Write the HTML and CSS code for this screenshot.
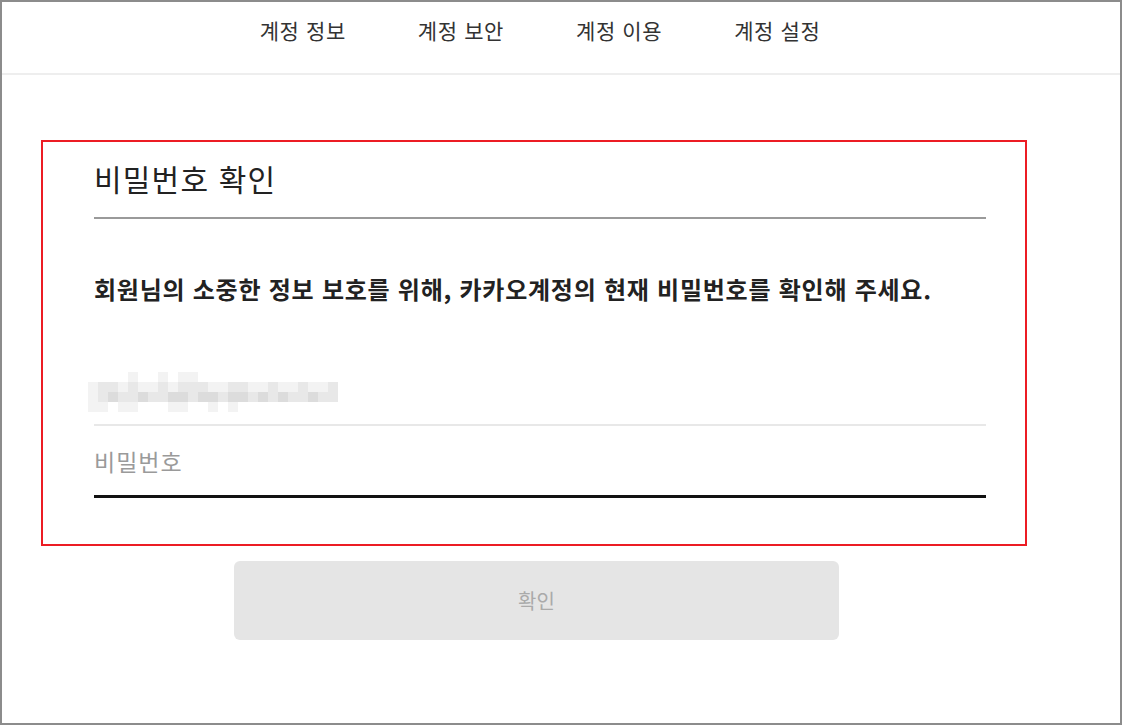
FILE: index.html
```html
<!DOCTYPE html>
<html lang="ko">
<head>
<meta charset="utf-8">
<title>비밀번호 확인</title>
<link rel="stylesheet" href="styles.css">
</head>
<body>
<div class="frame">
  <header class="topbar">
    <nav class="tabs">
      <a class="tab">계정 정보</a>
      <a class="tab">계정 보안</a>
      <a class="tab">계정 이용</a>
      <a class="tab">계정 설정</a>
    </nav>
  </header>
  <main class="content">
    <section class="panel">
      <h1 class="title">비밀번호 확인</h1>
      <p class="desc">회원님의 소중한 정보 보호를 위해, 카카오계정의 현재 비밀번호를 확인해 주세요.</p>
      <div class="id-field">
        <div class="mosaic" aria-label="가려진 계정">
          <span class="s0"></span><span class="s0"></span><span class="s0"></span><span class="s0"></span><span class="s1"></span><span class="s0"></span><span class="s0"></span><span class="s1"></span><span class="s0"></span><span class="s1"></span><span class="s1"></span><span class="s0"></span><span class="s0"></span><span class="s0"></span><span class="s0"></span><span class="s0"></span><span class="s0"></span><span class="s0"></span><span class="s0"></span><span class="s0"></span><span class="s0"></span><span class="s0"></span><span class="s0"></span><span class="s0"></span><span class="s0"></span><span class="s0"></span>
          <span class="s1"></span><span class="s2"></span><span class="s2"></span><span class="s1"></span><span class="s2"></span><span class="s1"></span><span class="s1"></span><span class="s2"></span><span class="s1"></span><span class="s2"></span><span class="s2"></span><span class="s2"></span><span class="s1"></span><span class="s1"></span><span class="s2"></span><span class="s2"></span><span class="s1"></span><span class="s1"></span><span class="s2"></span><span class="s1"></span><span class="s1"></span><span class="s2"></span><span class="s1"></span><span class="s1"></span><span class="s2"></span><span class="s0"></span>
          <span class="s1"></span><span class="s2"></span><span class="s3"></span><span class="s2"></span><span class="s2"></span><span class="s3"></span><span class="s2"></span><span class="s2"></span><span class="s3"></span><span class="s3"></span><span class="s2"></span><span class="s3"></span><span class="s3"></span><span class="s2"></span><span class="s3"></span><span class="s3"></span><span class="s2"></span><span class="s3"></span><span class="s2"></span><span class="s3"></span><span class="s2"></span><span class="s2"></span><span class="s3"></span><span class="s2"></span><span class="s2"></span><span class="s0"></span>
          <span class="s1"></span><span class="s1"></span><span class="s0"></span><span class="s1"></span><span class="s1"></span><span class="s0"></span><span class="s0"></span><span class="s0"></span><span class="s1"></span><span class="s1"></span><span class="s0"></span><span class="s0"></span><span class="s1"></span><span class="s0"></span><span class="s1"></span><span class="s0"></span><span class="s0"></span><span class="s0"></span><span class="s0"></span><span class="s0"></span><span class="s0"></span><span class="s0"></span><span class="s0"></span><span class="s0"></span><span class="s0"></span><span class="s0"></span>
        </div>
      </div>
      <div class="pw-field">
        <input class="pw-input" type="password" placeholder="비밀번호">
      </div>
    </section>
    <button class="confirm" type="button" disabled>확인</button>
  </main>
</div>
</body>
</html>
```

FILE: styles.css
```css
* {
  box-sizing: border-box;
}

html, body {
  margin: 0;
  padding: 0;
  background: #ffffff;
}

body {
  font-family: "Noto Sans CJK KR", "Noto Sans", sans-serif;
  color: #222222;
}

.frame {
  width: 1122px;
  height: 725px;
  border: 2px solid #8c8c8c;
  background: #ffffff;
  overflow: hidden;
}

.topbar {
  height: 73px;
  border-bottom: 2px solid #eeeeee;
}

.tabs {
  display: flex;
  justify-content: center;
  gap: 72px;
  padding-top: 14px;
  padding-right: 42px;
}

.tab {
  font-size: 21px;
  line-height: 28px;
  color: #333333;
  text-decoration: none;
  letter-spacing: 0.6px;
}

.content {
  display: flex;
  flex-direction: column;
  align-items: flex-start;
}

.panel {
  margin: 65px 0 0 39px;
  width: 986px;
  border: 2px solid #ec1c24;
  padding: 16px 39px 46px 51px;
}

.title {
  margin: 0;
  font-size: 30px;
  font-weight: 400;
  line-height: 40px;
  color: #222222;
  letter-spacing: 1.2px;
  padding-bottom: 19px;
  border-bottom: 2px solid #9a9a9a;
}

.desc {
  margin: 54px 0 0 0;
  font-size: 24px;
  font-weight: 700;
  line-height: 32px;
  color: #222222;
  letter-spacing: 0.75px;
}

.id-field {
  padding: 67px 0 12px 0;
  border-bottom: 2px solid #e8e8e8;
}

.mosaic {
  display: grid;
  grid-template-columns: repeat(26, 10px);
  grid-auto-rows: 10px;
  margin-left: -6px;
  width: 260px;
  height: 40px;
}

.mosaic span {
  display: block;
}

.s0 { background: #ffffff; }
.s1 { background: #f3f3f3; }
.s2 { background: #e8e8e8; }
.s3 { background: #dcdcdc; }

.pw-field {
  display: flex;
}

.pw-input {
  width: 100%;
  height: 72px;
  border: none;
  border-bottom: 3px solid #111111;
  padding: 0;
  margin: 0;
  font-family: "Noto Sans CJK KR", "Noto Sans", sans-serif;
  font-size: 23px;
  letter-spacing: 1px;
  color: #222222;
  outline: none;
  background: transparent;
}

.pw-input::placeholder {
  color: #9a9a9a;
}

.confirm {
  margin: 15px 0 0 232px;
  width: 605px;
  height: 79px;
  border: none;
  border-radius: 6px;
  background: #e5e5e5;
  color: #aaaaaa;
  font-family: "Noto Sans CJK KR", "Noto Sans", sans-serif;
  font-size: 20px;
  padding: 0;
}
```
